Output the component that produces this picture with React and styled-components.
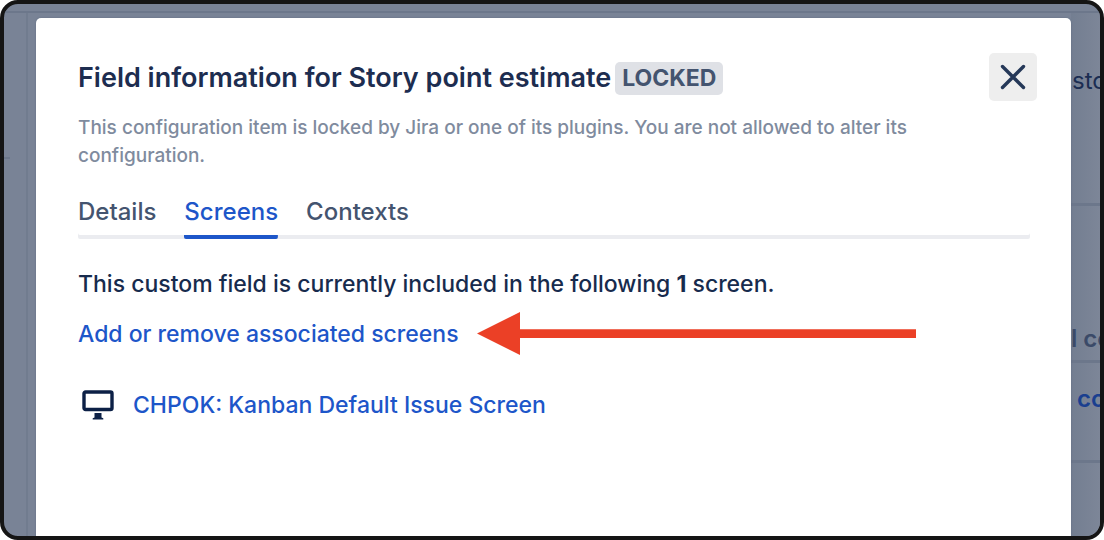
import React from "react";
import styled, { createGlobalStyle } from "styled-components";

const GlobalStyle = createGlobalStyle`
  *, *::before, *::after { box-sizing: border-box; }
  body {
    margin: 0;
    background: #ffffff;
    font-family: Inter, "Liberation Sans", sans-serif;
    color: #172b4d;
  }
  h1, p, ul { margin: 0; padding: 0; }
`;

const Frame = styled.div`
  position: relative;
  display: flex;
  min-height: 100vh;
  border: 4px solid #151515;
  border-radius: 18px;
  overflow: hidden;
  background: #798396;
`;

const Backdrop = styled.div`
  position: absolute;
  inset: 0;
  display: flex;
  flex-direction: column;
`;

const BackdropBar = styled.div`
  height: 9px;
  border-bottom: 2px solid #6c778b;
`;

const BackdropBody = styled.div`
  flex: 1;
  display: flex;
  justify-content: space-between;
`;

const Sidebar = styled.div`
  width: 24px;
  border-right: 2px solid #717c8f;
`;

const SidebarMark = styled.div`
  width: 6px;
  height: 146px;
  border-bottom: 2px solid #6c778b;
`;

const Rail = styled.div`
  width: 29px;
  overflow: hidden;
  background: linear-gradient(90deg, #737e91, #7d8698);
`;

const RailCell = styled.div`
  display: flex;
  align-items: ${(p) => p.$align || "flex-end"};
  height: ${(p) => p.$height}px;
  padding: ${(p) => p.$padding || "0"};
  border-bottom: 3px solid #6c778b;
  color: ${(p) => p.$color};
  font-size: 24px;
  font-weight: ${(p) => p.$weight || 400};
  line-height: 32px;
  white-space: pre;
`;

const Modal = styled.main`
  position: relative;
  flex: 1;
  margin: 14px 29px 0 32px;
  padding: 35px 34px 40px 42px;
  border-radius: 5px 5px 0 0;
  background: #ffffff;
  box-shadow: 0 0 2px #5f6d83;
`;

const Header = styled.header`
  display: flex;
  align-items: flex-start;
  justify-content: space-between;
`;

const Title = styled.h1`
  display: flex;
  align-items: center;
  gap: 4px;
  padding-top: 8px;
  font-size: 27px;
  font-weight: 600;
  line-height: 34px;
  color: #1d2d50;
`;

const Lozenge = styled.span`
  padding: 0 7px;
  border-radius: 5px;
  background: #dfe1e6;
  color: #44546f;
  font-size: 23px;
  font-weight: 700;
  line-height: 33px;
`;

const CloseButton = styled.button`
  display: grid;
  place-items: center;
  width: 48px;
  height: 48px;
  padding: 0;
  border: 0;
  border-radius: 5px;
  background: #eeeeee;
  color: #253858;
`;

const Description = styled.p`
  max-width: 860px;
  padding-top: 13px;
  font-size: 19px;
  font-weight: 500;
  line-height: 28px;
  color: #7f8b9e;
`;

const Tabs = styled.div`
  display: flex;
  gap: 28px;
  margin: 22px 7px 0 0;
  border-radius: 2px;
  box-shadow: inset 0 -4px #ebecf0;
`;

const Tab = styled.button`
  height: 47px;
  padding: 0 0 8px;
  border: 0;
  background: linear-gradient(${(p) => (p.$active ? "#1d56c9, #1d56c9" : "transparent, transparent")}) bottom / 100% 4px no-repeat;
  border-radius: 2px;
  color: ${(p) => (p.$active ? "#1d56c9" : "#44546f")};
  font: inherit;
  font-size: 24px;
  font-weight: 500;
`;

const Message = styled.p`
  padding-top: 29px;
  font-size: 23px;
  font-weight: 500;
  line-height: 32px;
  color: #172b4d;
`;

const LinkRow = styled.div`
  display: flex;
  align-items: center;
  gap: 18px;
  height: 43px;
  margin-top: 12px;
`;

const TextLink = styled.a`
  font-size: 23px;
  font-weight: 500;
  line-height: 32px;
  color: #1d56c9;
  text-decoration: none;
  white-space: nowrap;
`;

const ScreenList = styled.ul`
  list-style: none;
  padding: 34px 0 0 4px;
`;

const ScreenItem = styled.li`
  display: flex;
  align-items: center;
  gap: 19px;
`;

const CloseIcon = () => (
  <svg width="26" height="26" viewBox="0 0 26 26" aria-hidden="true">
    <path d="M2.5 2.5 23.5 23.5M23.5 2.5 2.5 23.5" fill="none" stroke="currentColor" strokeWidth="3.4" strokeLinecap="round" />
  </svg>
);

const Arrow = () => (
  <svg width="439" height="43" viewBox="0 0 439 43" aria-hidden="true">
    <path d="M0 21.5 43 0V17.2H439V26H43V43Z" fill="#eb4026" />
  </svg>
);

const ScreenIcon = () => (
  <svg width="32" height="30" viewBox="0 0 32 30" aria-hidden="true">
    <rect x="2" y="2" width="28" height="17.5" rx="1.5" fill="none" stroke="#0c2046" strokeWidth="3.4" />
    <path d="M12.5 23h7v4.6l1.8.6v1.3H10.700v-1.300l1.800-.6Z" fill="#0c2046" />
  </svg>
);

const tabs = ["Details", "Screens", "Contexts"];

export default function App() {
  return (
    <>
      <GlobalStyle />
      <Frame>
        <Backdrop>
          <BackdropBar />
          <BackdropBody>
            <Sidebar>
              <SidebarMark />
            </Sidebar>
            <Rail>
              <RailCell $height={193} $align="flex-start" $padding="52px 0 0 1px" $color="#1b2d52">sto</RailCell>
              <RailCell $height={157} $padding="0 0 5px" $color="#3b4a68" $weight={600}>l co</RailCell>
              <RailCell $height={100} $align="flex-start" $padding="20px 0 0 6px" $color="#1a3f8f" $weight={600}>co</RailCell>
            </Rail>
          </BackdropBody>
        </Backdrop>
        <Modal>
          <Header>
            <Title>
              Field information for Story point estimate <Lozenge>LOCKED</Lozenge>
            </Title>
            <CloseButton type="button" aria-label="Close">
              <CloseIcon />
            </CloseButton>
          </Header>
          <Description>
            This configuration item is locked by Jira or one of its plugins. You are not allowed to alter its
            configuration.
          </Description>
          <Tabs role="tablist">
            {tabs.map((name) => (
              <Tab key={name} type="button" role="tab" aria-selected={name === "Screens"} $active={name === "Screens"}>
                {name}
              </Tab>
            ))}
          </Tabs>
          <Message>
            This custom field is currently included in the following <b>1</b> screen.
          </Message>
          <LinkRow>
            <TextLink href="#screens">Add or remove associated screens</TextLink>
            <Arrow />
          </LinkRow>
          <ScreenList>
            <ScreenItem>
              <ScreenIcon />
              <TextLink href="#chpok">CHPOK: Kanban Default Issue Screen</TextLink>
            </ScreenItem>
          </ScreenList>
        </Modal>
      </Frame>
    </>
  );
}
